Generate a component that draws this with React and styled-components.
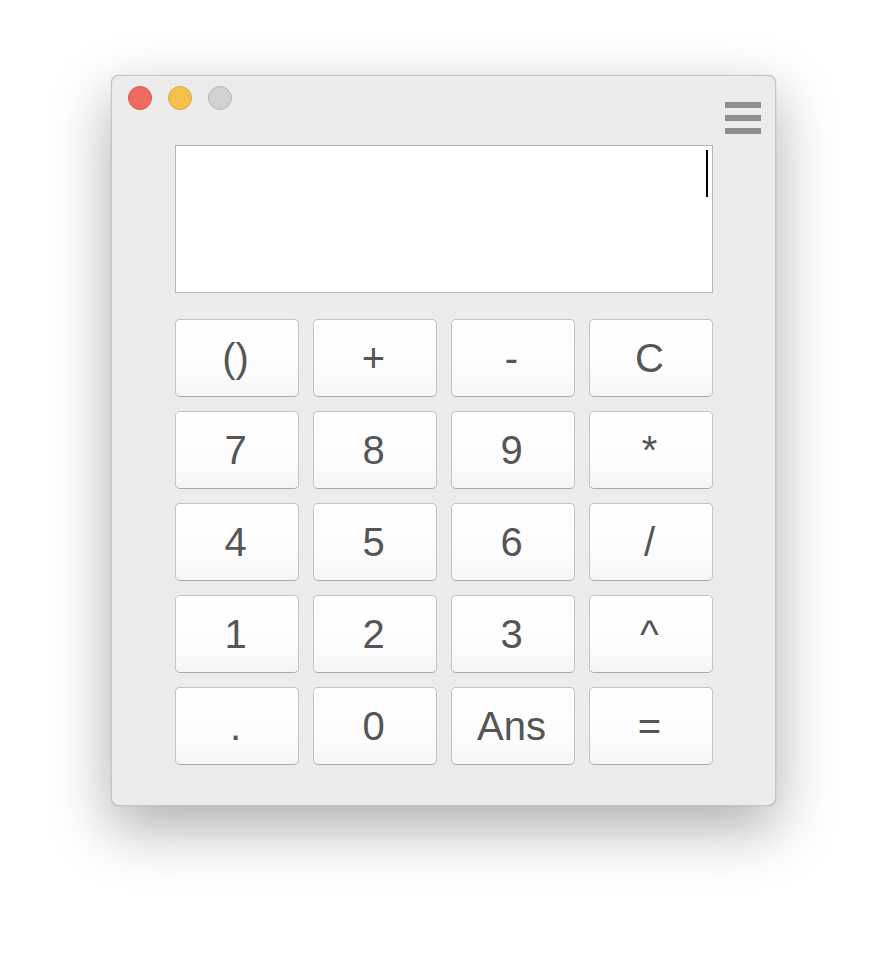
import React from 'react';
import styled, { createGlobalStyle } from 'styled-components';

const GlobalStyle = createGlobalStyle`
    html, body {
        margin: 0;
        padding: 0;
        background: #ffffff;
        font-family: "Liberation Sans", Arial, sans-serif;
    }
    * {
        box-sizing: border-box;
    }
`

const Page = styled.div`
    width: 888px;
    height: 954px;
    padding: 75px 0 0 111px;
`

const Window = styled.div`
    width: 665px;
    height: 731px;
    background-color: #ececec;
    border: 1px solid #c6c6c6;
    border-radius: 8px;
    box-shadow: 0 22px 60px rgba(0, 0, 0, 0.32), 0 0 1px rgba(0, 0, 0, 0.3);
    display: flex;
    flex-direction: column;
`

const TitleBar = styled.div`
    height: 69px;
    display: flex;
    justify-content: space-between;
    align-items: flex-start;
    padding: 10px 14px 0 16px;
`

const Lights = styled.div`
    display: flex;
    gap: 16px;
`

const Light = styled.div`
    width: 24px;
    height: 24px;
    border-radius: 50%;
    background-color: ${props => props.color};
    border: 1px solid ${props => props.edge};
`

const Menu = styled.div`
    margin-top: 16px;
    width: 36px;
    display: flex;
    flex-direction: column;
    gap: 7px;
    cursor: pointer;
`

const MenuBar = styled.div`
    height: 6px;
    background-color: #8e8e8e;
`

const Body = styled.div`
    padding: 0 62px 0 63px;
    display: flex;
    flex-direction: column;
    gap: 26px;
`

const Display = styled.div`
    position: relative;
    height: 148px;
    background-color: #fff;
    border: 1px solid #b3b3b3;
`

const Caret = styled.div`
    position: absolute;
    top: 4px;
    right: 4px;
    width: 2px;
    height: 47px;
    background-color: #000;
`

const Keypad = styled.div`
    display: grid;
    grid-template-columns: repeat(4, 124px);
    grid-auto-rows: 78px;
    gap: 14px;
`

const Key = styled.button`
    font-family: "Liberation Sans", Arial, sans-serif;
    font-size: 40px;
    line-height: 1;
    color: #555;
    background: linear-gradient(to bottom, #ffffff 0%, #fcfcfc 70%, #f5f5f5 100%);
    border: 1px solid #c4c4c4;
    border-bottom-color: #a9a9a9;
    border-radius: 5px;
    padding: 0 3px 0 0;
    display: flex;
    align-items: center;
    justify-content: center;
    cursor: pointer;

    &:active {
        background: #e8e8e8;
    }
`

const keys = [
    '()', '+', '-', 'C',
    '7', '8', '9', '*',
    '4', '5', '6', '/',
    '1', '2', '3', '^',
    '.', '0', 'Ans', '=',
]

function App() {
    return (
        <>
            <GlobalStyle />
            <Page>
                <Window>
                    <TitleBar>
                        <Lights>
                            <Light color="#ee6a5f" edge="#d5574d" />
                            <Light color="#f6c04f" edge="#dea73c" />
                            <Light color="#d1d1d1" edge="#b9b9b9" />
                        </Lights>
                        <Menu>
                            <MenuBar />
                            <MenuBar />
                            <MenuBar />
                        </Menu>
                    </TitleBar>
                    <Body>
                        <Display>
                            <Caret />
                        </Display>
                        <Keypad>
                            {keys.map(k => (
                                <Key key={k}>{k}</Key>
                            ))}
                        </Keypad>
                    </Body>
                </Window>
            </Page>
        </>
    )
}

export default App;
